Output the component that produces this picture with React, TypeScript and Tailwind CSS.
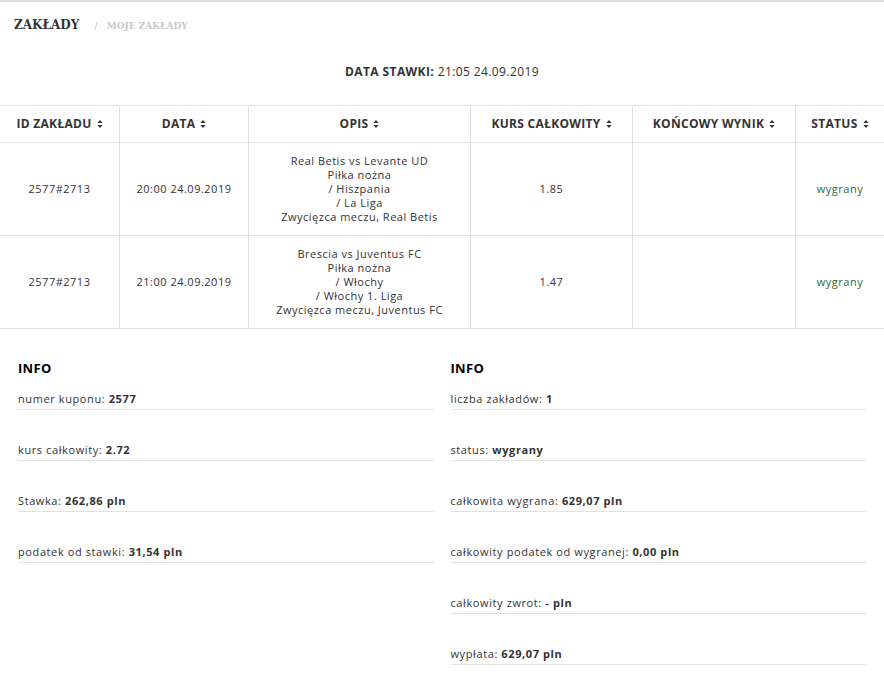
import React from "react";

type Bet = {
  id: string;
  date: string;
  desc: string[];
  odds: string;
  result: string;
  status: string;
};

const BETS: Bet[] = [
  {
    id: "2577#2713",
    date: "20:00 24.09.2019",
    desc: ["Real Betis vs Levante UD", "Piłka nożna", "/ Hiszpania", "/ La Liga", "Zwycięzca meczu, Real Betis"],
    odds: "1.85",
    result: "",
    status: "wygrany",
  },
  {
    id: "2577#2713",
    date: "21:00 24.09.2019",
    desc: ["Brescia vs Juventus FC", "Piłka nożna", "/ Włochy", "/ Włochy 1. Liga", "Zwycięzca meczu, Juventus FC"],
    odds: "1.47",
    result: "",
    status: "wygrany",
  },
];

const COLS = [
  { label: "ID ZAKŁADU", w: "w-[120px]" },
  { label: "DATA", w: "w-[129px]" },
  { label: "OPIS", w: "w-[222px]" },
  { label: "KURS CAŁKOWITY", w: "w-[162px]" },
  { label: "KOŃCOWY WYNIK", w: "w-[163px]" },
  { label: "STATUS", w: "flex-1" },
];

const LEFT_INFO: [string, string][] = [
  ["numer kuponu:", "2577"],
  ["kurs całkowity:", "2.72"],
  ["Stawka:", "262,86 pln"],
  ["podatek od stawki:", "31,54 pln"],
];

const RIGHT_INFO: [string, string][] = [
  ["liczba zakładów:", "1"],
  ["status:", "wygrany"],
  ["całkowita wygrana:", "629,07 pln"],
  ["całkowity podatek od wygranej:", "0,00 pln"],
  ["całkowity zwrot:", "- pln"],
  ["wypłata:", "629,07 pln"],
];

function SortIcon() {
  return (
    <svg viewBox="0 0 6 9" className="ml-[5px] h-[8px] w-[6px]" fill="currentColor">
      <path d="M3 0L6 3.3H0z" />
      <path d="M3 9L0 5.7H6z" />
    </svg>
  );
}

function InfoColumn({ rows }: { rows: [string, string][] }) {
  return (
    <div className="flex-1">
      <h3 className="text-[13px] font-bold leading-[18px] tracking-[0.3px] text-black">INFO</h3>
      <div className="mt-[14px]">
        {rows.map(([k, v], i) => (
          <div
            key={k}
            className={`border-b border-[#e2e2e2] pb-[2px] text-[11px] leading-[16px] tracking-[0.6px] text-[#333] ${i > 0 ? "mt-[32px]" : ""}`}
          >
            {k} <span className="font-bold">{v}</span>
          </div>
        ))}
      </div>
    </div>
  );
}

export default function App() {
  return (
    <div
      className="min-h-[674px] w-[884px] border-t-2 border-[#e0e0e0] bg-white text-[#333]"
      style={{ fontFamily: "'Open Sans', 'Noto Sans', sans-serif" }}
    >
      {/* breadcrumb */}
      <div className="flex items-baseline px-[14px] pt-[14px]" style={{ fontFamily: "'DejaVu Serif', 'Liberation Serif', serif" }}>
        <span className="text-[12px] font-bold text-[#333]">ZAKŁADY</span>
        <span className="ml-[15px] mr-[9px] text-[10px] text-[#bbb]">/</span>
        <span className="text-[9px] font-bold text-[#c8c8c8]">MOJE ZAKŁADY</span>
      </div>

      <div className="mt-[30px] text-center text-[12px] leading-[16px] tracking-[0.4px]">
        <span className="font-bold">DATA STAWKI:</span> 21:05 24.09.2019
      </div>

      {/* table */}
      <div className="mt-[25px] border-t border-[#e0e0e0]">
        <div className="flex h-[37px] border-b border-[#e0e0e0]">
          {COLS.map((c, i) => (
            <div
              key={c.label}
              className={`${c.w} flex items-center justify-center text-[12px] font-bold tracking-[0.3px] text-[#333] ${i < COLS.length - 1 ? "border-r border-[#e0e0e0]" : ""}`}
            >
              {c.label}
              <SortIcon />
            </div>
          ))}
        </div>
        {BETS.map((b, r) => (
          <div key={r} className="flex h-[93px] border-b border-[#e0e0e0] text-[11px] leading-[14px] tracking-[0.5px] text-[#333]">
            <div className="flex w-[120px] items-center justify-center border-r border-[#e0e0e0]">{b.id}</div>
            <div className="flex w-[129px] items-center justify-center border-r border-[#e0e0e0]">{b.date}</div>
            <div className="flex w-[222px] flex-col items-center justify-center border-r border-[#e0e0e0] text-center">
              {b.desc.map((d) => (
                <div key={d}>{d}</div>
              ))}
            </div>
            <div className="flex w-[162px] items-center justify-center border-r border-[#e0e0e0]">{b.odds}</div>
            <div className="flex w-[163px] items-center justify-center border-r border-[#e0e0e0]">{b.result}</div>
            <div className="flex flex-1 items-center justify-center text-[#2e6b34]">{b.status}</div>
          </div>
        ))}
      </div>

      {/* info */}
      <div className="flex gap-[17px] px-[18px] pt-[30px] pb-[10px]">
        <InfoColumn rows={LEFT_INFO} />
        <InfoColumn rows={RIGHT_INFO} />
      </div>
    </div>
  );
}
